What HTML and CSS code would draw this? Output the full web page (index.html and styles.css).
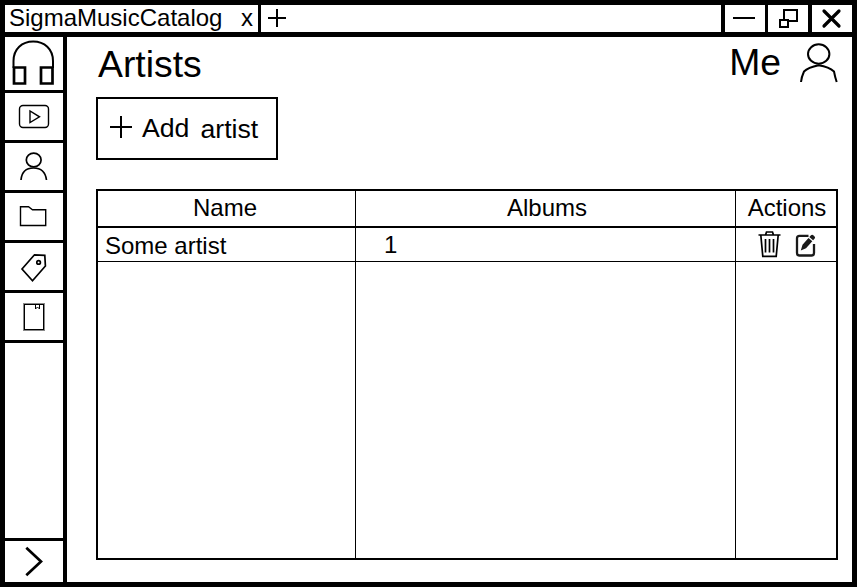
FILE: index.html
```html
<!DOCTYPE html>
<html lang="en">
<head>
<meta charset="utf-8">
<title>SigmaMusicCatalog</title>
<link rel="stylesheet" href="styles.css">
</head>
<body>
<div class="window">
  <header class="titlebar">
    <div class="tab"><span>SigmaMusicCatalog</span><span class="tab-close">x</span></div>
    <div class="new-tab"><svg width="20" height="27" viewBox="267 5 20 27"><path d="M268 18H286M277 9V27"/></svg></div>
    <div class="control minimize"><svg width="40" height="27" viewBox="725 5 40 27"><path d="M733 18H755"/></svg></div>
    <div class="control restore"><svg width="40" height="27" viewBox="768 5 40 27"><path d="M784 20V10H797V21H789M780 20H788V27H780Z"/></svg></div>
    <div class="control close"><svg width="40" height="27" viewBox="812 5 40 27"><path class="cross" d="M824 11L839 26M839 11L824 26"/></svg></div>
  </header>
  <div class="body">
    <nav class="sidebar">
      <div class="item home"><svg width="58" height="53" viewBox="5 37 58 53"><path class="arc" d="M13.5 68V61C13.5 49 22 41.5 33.2 41.5S53 49 53 61V68"/><path class="thick" d="M14 67.5H25V83.5H14ZM41 67.5H52.5V83.5H41Z"/></svg></div>
      <div class="item"><svg width="58" height="47" viewBox="5 93 58 47"><rect class="thin" x="19.5" y="105.5" width="29" height="22" rx="3.5"/><path class="thin" d="M30 111V122.5L39.5 116.8Z"/></svg></div>
      <div class="item"><svg width="58" height="47" viewBox="5 143 58 47"><ellipse class="medium" cx="33.7" cy="160" rx="7.4" ry="6.8"/><path class="medium" d="M21 180Q22 168 33.5 168T46.5 180"/></svg></div>
      <div class="item"><svg width="58" height="47" viewBox="5 193 58 47"><path class="thin" d="M20.5 225.5V206.8H28.5L32.5 209.7H45.7V225.5Z"/></svg></div>
      <div class="item"><svg width="58" height="47" viewBox="5 243 58 47"><path class="medium" d="M22 269L34.5 254.8L44.8 255.4L45.4 266L32.5 280.8Z"/><circle class="medium" cx="38.6" cy="262.4" r="1.8"/></svg></div>
      <div class="item"><svg width="58" height="47" viewBox="5 293 58 47"><rect class="shade" x="23.5" y="303.5" width="21" height="27"/><rect class="line" x="24.5" y="304.5" width="19" height="25"/><path class="line" d="M35.5 304V309L37.5 307L39.5 309V304"/></svg></div>
      <div class="item expand"><svg width="58" height="41" viewBox="5 541 58 41"><path class="thick" d="M26.3 547.7L41 561.5L26.3 575.3"/></svg></div>
    </nav>
    <main class="content">
      <div class="page-head">
        <h1>Artists</h1>
        <div class="account"><span>Me</span><svg width="38" height="40" viewBox="800 43 38 40"><ellipse class="arc" cx="818.7" cy="54" rx="10.7" ry="9.7"/><path class="arc" d="M801 82Q801.5 77 804 71.5Q808 67.5 818.7 65.3Q829 67 834 71.5Q835 77 836.7 82"/></svg></div>
      </div>
      <button class="add"><svg width="22" height="22" viewBox="0 0 22 22"><path d="M0 11H22M11 0V22"/></svg><span class="verb">Add</span><span class="noun">artist</span></button>
      <div class="table">
        <div class="cell head col-name">Name</div><div class="cell head col-albums">Albums</div><div class="cell head col-actions">Actions</div>
        <div class="cell name">Some artist</div><div class="cell count">1</div>
        <div class="cell actions">
          <svg width="24" height="28" viewBox="758 231 24 28"><path class="medium" d="M758.5 235H780.5M765.5 235L766.5 232H772.5L773.5 235M760.8 235L762.8 256.4H776.2L778.2 235M765.5 239V252.5M769.5 239V252.5M773.5 239V252.5"/></svg>
          <svg width="22" height="28" viewBox="795 231 22 28"><path class="edit-box" d="M808.5 235.8H799.5Q797 235.8 797 238.3V253Q797 255.5 799.5 255.5H811.5Q814 255.5 814 253V244"/><path class="pencil" d="M800.8 250.5L802.5 244.8L808.5 238L812.3 241.2L806 248.2ZM809.3 237.1L811 235.2Q812 234.4 813 235.1L814.6 236.5Q815.5 237.4 814.7 238.5L813.1 240.3Z"/></svg>
        </div>
        <div class="cell"></div><div class="cell"></div><div class="cell"></div>
      </div>
    </main>
  </div>
</div>
</body>
</html>
```

FILE: styles.css
```css
* { box-sizing: border-box; }
body {
  margin: 0;
  font: 24px/27px "Liberation Sans", Arial, sans-serif;
  color: #000;
  background: #fff;
}
svg { display: block; flex: none; fill: none; stroke: #000; stroke-width: 2; }
.line { stroke-width: 1; }
.thin { stroke-width: 1.4; }
.medium { stroke-width: 1.7; }
.arc { stroke-width: 2; }
.thick { stroke-width: 2.7; }
.cross { stroke-width: 3.2; stroke-linecap: round; }
.shade { stroke: #888; stroke-width: 1; }
.edit-box { stroke: #1a1a1a; stroke-width: 2.3; }
.pencil { fill: #1a1a1a; stroke: none; }

.window {
  display: flex;
  flex-direction: column;
  width: 857px;
  height: 587px;
  border: 5px solid #000;
}
.titlebar { display: flex; flex: none; height: 32px; border-bottom: 5px solid #000; }
.tab {
  display: flex;
  justify-content: space-between;
  width: 256px;
  padding: 0 5px 0 4px;
  line-height: 25px;
  border-right: 3px solid #000;
}
.new-tab { flex: 1; padding-left: 6px; }
.control { width: 44px; border-left: 4px solid #000; }
.restore { width: 43px; border-left-width: 3px; }

.body { display: flex; flex: 1; min-height: 0; }
.sidebar {
  display: flex;
  flex-direction: column;
  flex: none;
  width: 62px;
  border-right: 4px solid #000;
}
.item { height: 50px; border-bottom: 3px solid #000; }
.home { height: 56px; }
.expand { height: 44px; margin-top: auto; border-top: 3px solid #000; border-bottom: 0; }

.content { flex: 1; display: flex; flex-direction: column; padding: 0 14px 22px 29px; }
.page-head {
  display: flex;
  justify-content: space-between;
  height: 60px;
  font-size: 37.33px;
  line-height: 42px;
}
h1 { margin: 6px 0 0 2px; font-size: inherit; font-weight: 400; }
.account { display: flex; gap: 19px; margin: 4px 0 0; }
.account svg { margin-top: 2px; }
.add {
  display: flex;
  align-items: center;
  width: 182px;
  height: 63px;
  padding: 0 0 1px 12px;
  border: 2px solid #000;
  background: #fff;
  color: #000;
  font: 26.67px/30px "Liberation Sans", Arial, sans-serif;
}
.add svg { margin: 0 10px 2px 0; }
.verb { margin-top: 0; }
.noun { margin: 2px 0 0 11px; }

.table {
  display: grid;
  grid-template-columns: 258px 380px 100px;
  grid-template-rows: 37px 34px 1fr;
  flex: 1;
  margin-top: 29px;
  border: 2px solid #000;
}
.cell { border-right: 1px solid #000; border-bottom: 1px solid #000; }
.cell:nth-child(3n) { border-right: 0; }
.cell:nth-last-child(-n+3) { border-bottom: 0; }
.head { border-bottom-width: 2px; text-align: center; line-height: 33px; }
.col-name { padding-right: 3px; }
.col-albums { padding-left: 3px; }
.col-actions { padding-left: 2px; }
.name { padding-left: 7px; line-height: 35px; }
.count { padding-left: 28px; line-height: 33px; }
.actions { display: flex; gap: 13px; padding: 3px 0 0 22px; }
```
